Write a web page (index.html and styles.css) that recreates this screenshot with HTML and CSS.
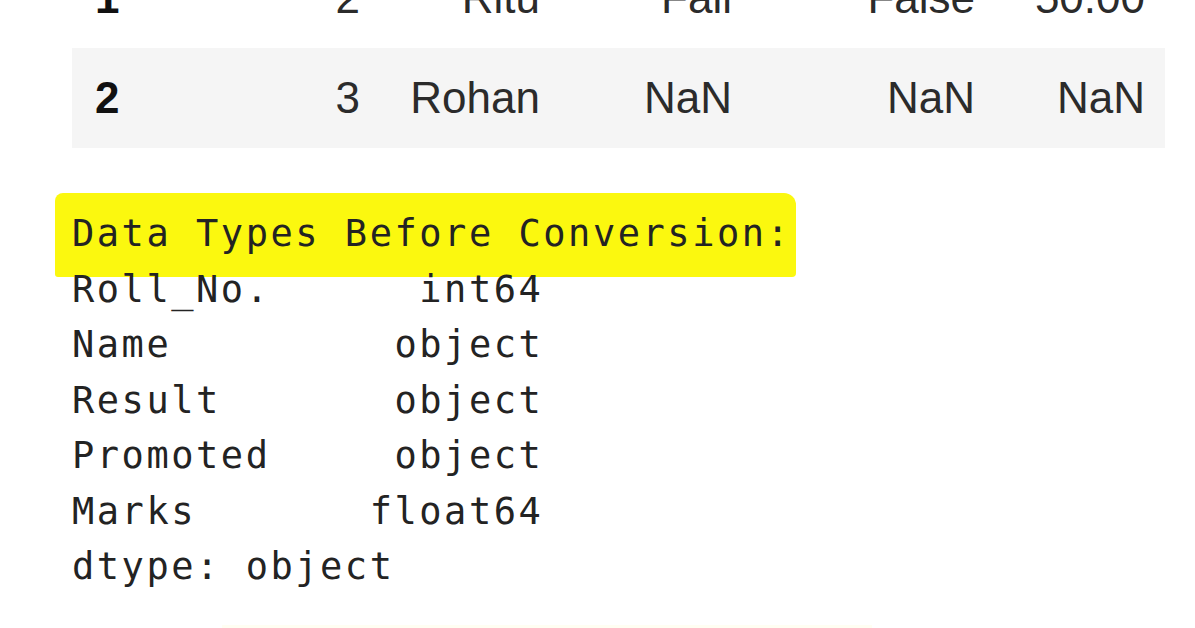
FILE: index.html
```html
<!DOCTYPE html>
<html lang="en">
<head>
<meta charset="utf-8">
<title>Data Types Before Conversion</title>
<link rel="stylesheet" href="styles.css">
</head>
<body>
<div class="output">
  <div class="df">
    <div class="row">
      <div class="cell idx">1</div>
      <div class="cell">2</div>
      <div class="cell">Ritu</div>
      <div class="cell">Fail</div>
      <div class="cell">False</div>
      <div class="cell">50.00</div>
    </div>
    <div class="row shaded">
      <div class="cell idx">2</div>
      <div class="cell">3</div>
      <div class="cell">Rohan</div>
      <div class="cell">NaN</div>
      <div class="cell">NaN</div>
      <div class="cell">NaN</div>
    </div>
  </div>
  <pre class="stream"><span class="marker">Data Types Before Conversion:</span>Roll_No.      int64
Name         object
Result       object
Promoted     object
Marks       float64
dtype: object</pre>
  <div class="faint-marker"></div>
</div>
</body>
</html>
```

FILE: styles.css
```css
html, body {
  margin: 0;
  padding: 0;
  background: #ffffff;
  overflow: hidden;
}

.output {
  padding-left: 72px;
  width: 1093px;
}

.df {
  margin-top: -52px;
  font-family: "Liberation Sans", Arial, sans-serif;
  font-size: 44px;
  color: #2b2b2b;
}

.row {
  display: grid;
  grid-template-columns: 120px 188px 180px 192px 243px 170px;
  height: 100px;
  align-items: center;
}

.row.shaded {
  background: #f5f5f5;
}

.cell {
  text-align: right;
  padding-right: 20px;
  white-space: nowrap;
}

.cell.idx {
  text-align: left;
  padding-left: 23px;
  padding-right: 0;
  font-weight: bold;
  color: #111111;
}

.stream {
  margin: 58px 0 0 0;
  font-family: "DejaVu Sans Mono", "Liberation Mono", monospace;
  font-size: 37px;
  letter-spacing: 2.53px;
  line-height: 55.5px;
  color: #232323;
  white-space: pre;
}

.marker {
  display: block;
  width: fit-content;
  background: #fbf80f;
  margin: -13px 0 -15px -17px;
  padding: 13px 5px 15px 17px;
  border-radius: 8px 12px 4px 3px;
}

.faint-marker {
  margin: 30px 0 0 150px;
  width: 650px;
  height: 20px;
  background: #fffef2;
}
```
